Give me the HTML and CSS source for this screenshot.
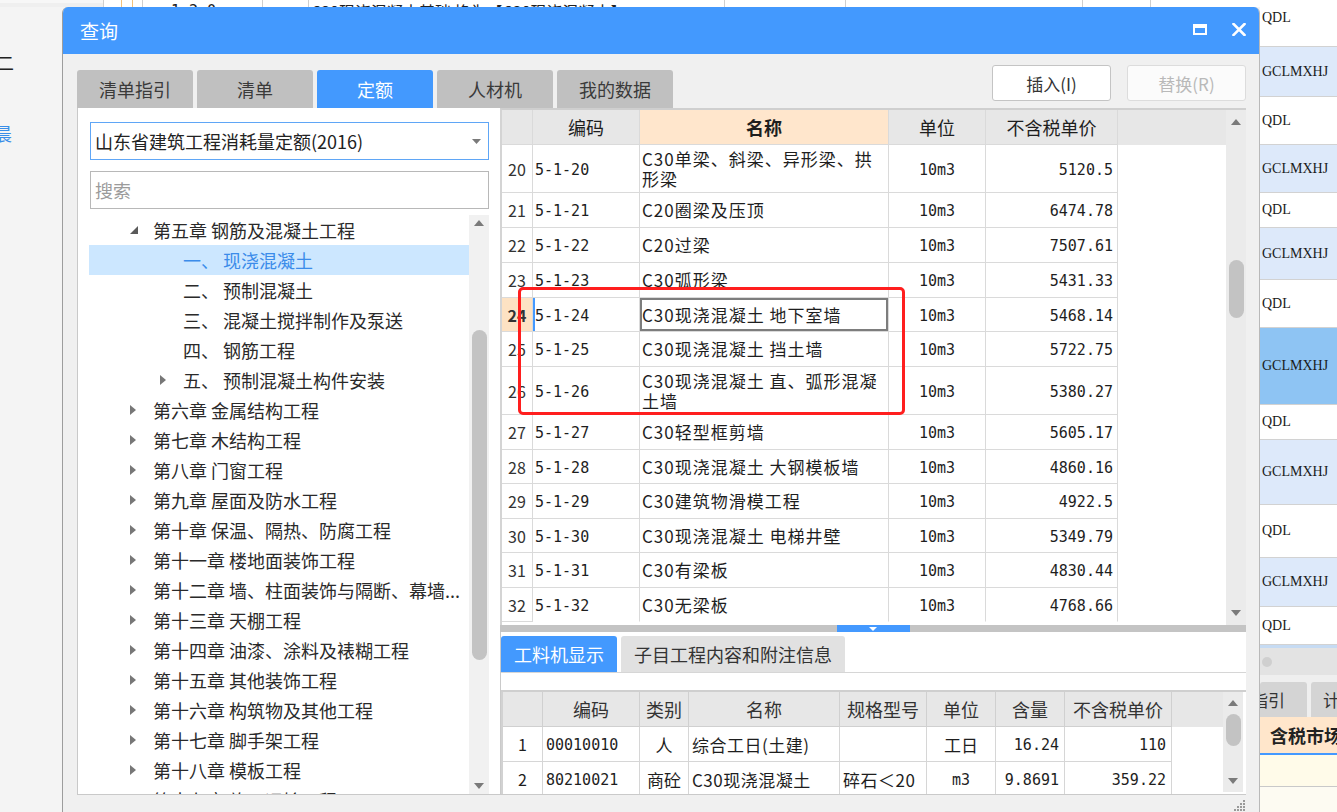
FILE: index.html
```html
<!DOCTYPE html>
<html lang="zh-CN">
<head>
<meta charset="utf-8">
<title>查询</title>
<link rel="stylesheet" href="styles.css">
</head>
<body>
<div class="app">
  <div class="app-main">
    <div class="strip">
      <div class="s0"></div><div></div><div class="so"></div><div class="so"></div>
      <div class="st1">1.2.0</div><div></div>
      <div class="st2">C30现浇混凝土基础 换为【C30现浇混凝土】</div>
      <div></div><div></div><div></div><div></div>
    </div>
    <div class="app-left">
      <div class="lt">二</div>
      <div class="lt lt-blue">晨</div>
    </div>
  </div>
  <div class="side">
    <div class="srow first">QDL</div>
    <div class="srow blue">GCLMXHJ</div>
    <div class="srow">QDL</div>
    <div class="srow blue">GCLMXHJ</div>
    <div class="srow">QDL</div>
    <div class="srow blue">GCLMXHJ</div>
    <div class="srow">QDL</div>
    <div class="srow sel">GCLMXHJ</div>
    <div class="srow">QDL</div>
    <div class="srow blue">GCLMXHJ</div>
    <div class="srow">QDL</div>
    <div class="srow blue">GCLMXHJ</div>
    <div class="srow">QDL</div>
    <div class="s-line"></div>
    <div class="s-hscroll"><span class="s-knob"></span></div>
    <div class="s-gap"></div>
    <div class="s-tabs"><div class="s-tab s-tab1">指引</div><div class="s-tab s-tab2">计</div></div>
    <div class="s-head">含税市场</div>
    <div class="s-blue"></div>
    <div class="s-yellow"></div>
    <div class="s-rest"></div>
  </div>
</div>

<div class="dialog">
  <div class="titlebar">
    <span class="title">查询</span>
    <div class="win-btns">
      <span class="max-icon"></span>
      <svg class="close-icon" width="14" height="13" viewBox="0 0 14 13"><path d="M1.5 1 L12.5 12 M12.5 1 L1.5 12" stroke="#fff" stroke-width="2.6" stroke-linecap="square"/></svg>
    </div>
  </div>
  <div class="dlg-body">
    <div class="toprow">
      <div class="tabs">
        <div class="tab">清单指引</div>
        <div class="tab">清单</div>
        <div class="tab active">定额</div>
        <div class="tab">人材机</div>
        <div class="tab">我的数据</div>
      </div>
      <div class="actions">
        <button class="btn">插入(I)</button>
        <button class="btn disabled">替换(R)</button>
      </div>
    </div>

    <div class="main">
      <div class="leftpanel">
        <div class="combo"><span>山东省建筑工程消耗量定额(2016)</span><svg class="combo-arrow" width="9" height="5" viewBox="0 0 9 5"><polygon points="0,0 9,0 4.5,5" fill="#7a7a7a"/></svg></div>
        <div class="search">搜索</div>
        <div class="tree">
          <div class="tree-list">
            <div class="node l1"><span class="twisty"><svg width="8" height="8" viewBox="0 0 8 8"><polygon points="8,0 8,8 0,8" fill="#5a5a5a"/></svg></span><span class="label">第五章 钢筋及混凝土工程</span></div>
            <div class="node l2 selected"><span class="twisty"></span><span class="label">一、 现浇混凝土</span></div>
            <div class="node l2"><span class="twisty"></span><span class="label">二、 预制混凝土</span></div>
            <div class="node l2"><span class="twisty"></span><span class="label">三、 混凝土搅拌制作及泵送</span></div>
            <div class="node l2"><span class="twisty"></span><span class="label">四、 钢筋工程</span></div>
            <div class="node l2"><span class="twisty"><svg width="6" height="10" viewBox="0 0 6 10"><polygon points="0,0 6,5 0,10" fill="#777"/></svg></span><span class="label">五、 预制混凝土构件安装</span></div>
            <div class="node l1"><span class="twisty"><svg width="6" height="10" viewBox="0 0 6 10"><polygon points="0,0 6,5 0,10" fill="#777"/></svg></span><span class="label">第六章 金属结构工程</span></div>
            <div class="node l1"><span class="twisty"><svg width="6" height="10" viewBox="0 0 6 10"><polygon points="0,0 6,5 0,10" fill="#777"/></svg></span><span class="label">第七章 木结构工程</span></div>
            <div class="node l1"><span class="twisty"><svg width="6" height="10" viewBox="0 0 6 10"><polygon points="0,0 6,5 0,10" fill="#777"/></svg></span><span class="label">第八章 门窗工程</span></div>
            <div class="node l1"><span class="twisty"><svg width="6" height="10" viewBox="0 0 6 10"><polygon points="0,0 6,5 0,10" fill="#777"/></svg></span><span class="label">第九章 屋面及防水工程</span></div>
            <div class="node l1"><span class="twisty"><svg width="6" height="10" viewBox="0 0 6 10"><polygon points="0,0 6,5 0,10" fill="#777"/></svg></span><span class="label">第十章 保温、隔热、防腐工程</span></div>
            <div class="node l1"><span class="twisty"><svg width="6" height="10" viewBox="0 0 6 10"><polygon points="0,0 6,5 0,10" fill="#777"/></svg></span><span class="label">第十一章 楼地面装饰工程</span></div>
            <div class="node l1"><span class="twisty"><svg width="6" height="10" viewBox="0 0 6 10"><polygon points="0,0 6,5 0,10" fill="#777"/></svg></span><span class="label">第十二章 墙、柱面装饰与隔断、幕墙...</span></div>
            <div class="node l1"><span class="twisty"><svg width="6" height="10" viewBox="0 0 6 10"><polygon points="0,0 6,5 0,10" fill="#777"/></svg></span><span class="label">第十三章 天棚工程</span></div>
            <div class="node l1"><span class="twisty"><svg width="6" height="10" viewBox="0 0 6 10"><polygon points="0,0 6,5 0,10" fill="#777"/></svg></span><span class="label">第十四章 油漆、涂料及裱糊工程</span></div>
            <div class="node l1"><span class="twisty"><svg width="6" height="10" viewBox="0 0 6 10"><polygon points="0,0 6,5 0,10" fill="#777"/></svg></span><span class="label">第十五章 其他装饰工程</span></div>
            <div class="node l1"><span class="twisty"><svg width="6" height="10" viewBox="0 0 6 10"><polygon points="0,0 6,5 0,10" fill="#777"/></svg></span><span class="label">第十六章 构筑物及其他工程</span></div>
            <div class="node l1"><span class="twisty"><svg width="6" height="10" viewBox="0 0 6 10"><polygon points="0,0 6,5 0,10" fill="#777"/></svg></span><span class="label">第十七章 脚手架工程</span></div>
            <div class="node l1"><span class="twisty"><svg width="6" height="10" viewBox="0 0 6 10"><polygon points="0,0 6,5 0,10" fill="#777"/></svg></span><span class="label">第十八章 模板工程</span></div>
            <div class="node l1"><span class="twisty"><svg width="6" height="10" viewBox="0 0 6 10"><polygon points="0,0 6,5 0,10" fill="#777"/></svg></span><span class="label">第十九章 施工运输工程</span></div>
          </div>
          <div class="vscroll tree-scroll">
            <div class="arr"><svg width="10" height="6" viewBox="0 0 10 6"><polygon points="0,6 10,6 5,0" fill="#7a7a7a"/></svg></div>
            <div class="thumb"></div>
            <div class="arr arr-down"><svg width="10" height="6" viewBox="0 0 10 6"><polygon points="0,0 10,0 5,6" fill="#7a7a7a"/></svg></div>
          </div>
        </div>
      </div>

      <div class="rightpanel">
        <div class="grid-area">
          <div class="grid">
            <div class="grow ghead"><div class="c"></div><div class="c">编码</div><div class="c hname">名称</div><div class="c">单位</div><div class="c">不含税单价</div></div>
            <div class="grow h48"><div class="c num">20</div><div class="c code">5-1-20</div><div class="c name">C30单梁、斜梁、异形梁、拱形梁</div><div class="c unit">10m3</div><div class="c price">5120.5</div></div>
            <div class="grow h35"><div class="c num">21</div><div class="c code">5-1-21</div><div class="c name">C20圈梁及压顶</div><div class="c unit">10m3</div><div class="c price">6474.78</div></div>
            <div class="grow h35"><div class="c num">22</div><div class="c code">5-1-22</div><div class="c name">C20过梁</div><div class="c unit">10m3</div><div class="c price">7507.61</div></div>
            <div class="grow h35"><div class="c num">23</div><div class="c code">5-1-23</div><div class="c name">C30弧形梁</div><div class="c unit">10m3</div><div class="c price">5431.33</div></div>
            <div class="grow h34 current"><div class="c num">24</div><div class="c code">5-1-24</div><div class="c name focus">C30现浇混凝土 地下室墙</div><div class="c unit">10m3</div><div class="c price">5468.14</div></div>
            <div class="grow h35"><div class="c num">25</div><div class="c code">5-1-25</div><div class="c name">C30现浇混凝土 挡土墙</div><div class="c unit">10m3</div><div class="c price">5722.75</div></div>
            <div class="grow h48"><div class="c num">26</div><div class="c code">5-1-26</div><div class="c name">C30现浇混凝土 直、弧形混凝土墙</div><div class="c unit">10m3</div><div class="c price">5380.27</div></div>
            <div class="grow h35"><div class="c num">27</div><div class="c code">5-1-27</div><div class="c name">C30轻型框剪墙</div><div class="c unit">10m3</div><div class="c price">5605.17</div></div>
            <div class="grow h34"><div class="c num">28</div><div class="c code">5-1-28</div><div class="c name">C30现浇混凝土 大钢模板墙</div><div class="c unit">10m3</div><div class="c price">4860.16</div></div>
            <div class="grow h35"><div class="c num">29</div><div class="c code">5-1-29</div><div class="c name">C30建筑物滑模工程</div><div class="c unit">10m3</div><div class="c price">4922.5</div></div>
            <div class="grow h34"><div class="c num">30</div><div class="c code">5-1-30</div><div class="c name">C30现浇混凝土 电梯井壁</div><div class="c unit">10m3</div><div class="c price">5349.79</div></div>
            <div class="grow h35"><div class="c num">31</div><div class="c code">5-1-31</div><div class="c name">C30有梁板</div><div class="c unit">10m3</div><div class="c price">4830.44</div></div>
            <div class="grow h34 last"><div class="c num">32</div><div class="c code">5-1-32</div><div class="c name">C30无梁板</div><div class="c unit">10m3</div><div class="c price">4768.66</div></div>
          </div>
          <div class="vscroll grid-scroll">
            <div class="arr"><svg width="10" height="6" viewBox="0 0 10 6"><polygon points="0,6 10,6 5,0" fill="#7a7a7a"/></svg></div>
            <div class="thumb"></div>
            <div class="arr arr-down"><svg width="10" height="6" viewBox="0 0 10 6"><polygon points="0,0 10,0 5,6" fill="#7a7a7a"/></svg></div>
          </div>
          <div class="annot"></div>
        </div>

        <div class="splitter"><span class="split-handle"><svg width="8" height="4" viewBox="0 0 8 4"><polygon points="0,0 8,0 4,4" fill="#fff"/></svg></span></div>

        <div class="detail">
          <div class="dtabs">
            <div class="dtab active">工料机显示</div>
            <div class="dtab wide">子目工程内容和附注信息</div>
          </div>
          <div class="dband"></div>
          <div class="dgrid-area">
            <div class="dgrid">
              <div class="drow dhead"><div class="c"></div><div class="c">编码</div><div class="c">类别</div><div class="c">名称</div><div class="c">规格型号</div><div class="c">单位</div><div class="c">含量</div><div class="c">不含税单价</div></div>
              <div class="drow"><div class="c dnum">1</div><div class="c dcode">00010010</div><div class="c dcenter">人</div><div class="c dname">综合工日(土建)</div><div class="c dname"></div><div class="c dcenter">工日</div><div class="c dval">16.24</div><div class="c dval">110</div></div>
              <div class="drow"><div class="c dnum">2</div><div class="c dcode">80210021</div><div class="c dcenter">商砼</div><div class="c dname">C30现浇混凝土</div><div class="c dname">碎石＜20</div><div class="c dcenter dmono">m3</div><div class="c dval">9.8691</div><div class="c dval">359.22</div></div>
            </div>
            <div class="vscroll dgrid-scroll">
              <div class="arr"><svg width="10" height="6" viewBox="0 0 10 6"><polygon points="0,6 10,6 5,0" fill="#7a7a7a"/></svg></div>
              <div class="thumb"></div>
              <div class="arr arr-down"><svg width="10" height="6" viewBox="0 0 10 6"><polygon points="0,0 10,0 5,6" fill="#7a7a7a"/></svg></div>
            </div>
          </div>
        </div>
      </div>
    </div>

    <div class="footer">
      <svg width="12" height="12" viewBox="0 0 12 12"><g fill="#9a9a9a"><rect x="9" y="1" width="2" height="2"/><rect x="6" y="4" width="2" height="2"/><rect x="9" y="4" width="2" height="2"/><rect x="3" y="7" width="2" height="2"/><rect x="6" y="7" width="2" height="2"/><rect x="9" y="7" width="2" height="2"/><rect x="0" y="10" width="2" height="2"/><rect x="3" y="10" width="2" height="2"/><rect x="6" y="10" width="2" height="2"/><rect x="9" y="10" width="2" height="2"/></g></svg>
    </div>
  </div>
</div>
</body>
</html>
```

FILE: styles.css
```css
* { box-sizing: border-box; }
html, body { margin: 0; padding: 0; }
body {
  width: 1337px;
  height: 812px;
  overflow: hidden;
  position: relative;
  background: #f4f4f4;
  font-family: "Noto Sans CJK SC", "Noto Sans", sans-serif;
  color: #333;
}

/* ---------- background application ---------- */
.app {
  display: grid;
  grid-template-columns: 1260px 77px;
  height: 812px;
}
.app-main { background: #f4f4f4; overflow: hidden; }
.strip {
  display: grid;
  grid-template-columns: 103px 18px 11px 10px 120px 46px 416px 121px 237px 68px 110px;
  height: 7px;
  overflow: hidden;
  background: #fff;
}
.strip > div {
  border-left: 1px solid #cfcfcf;
  font-size: 16px;
  line-height: 22px;
  white-space: nowrap;
  overflow: hidden;
  color: #222;
}
.strip .s0 { border-left: none; background: #efefef; border-top: 3px solid #f7f7f7; }
.strip .so { border-left-color: #f2c27c; }
.strip .st1 { padding-left: 28px; font-family: "DejaVu Sans Mono", monospace; font-size: 15px; }
.strip .st2 { padding-left: 2px; }

.app-left { padding-top: 43px; }
.lt {
  font-size: 18px;
  line-height: 24px;
  margin-left: -4px;
  color: #222;
}
.lt-blue { color: #3a8ee8; margin-top: 47px; margin-left: -6px; }

.side {
  display: grid;
  grid-template-rows: 47px 50px 48px 48px 35px 52px 48px 77px 35px 65px 53px 49px 38px 3px 27px 7px 35px 36px 2px 32px 1fr;
  background: #fff;
  font-family: "Liberation Serif", serif;
  font-size: 14px;
  color: #1a1a1a;
  overflow: hidden;
}
.srow {
  display: flex;
  align-items: center;
  padding-left: 2px;
  border-bottom: 1px solid #d2d2d2;
  white-space: nowrap;
}
.srow.first { padding-bottom: 10px; }
.srow.blue { background: #dde9fa; }
.srow.sel { background: #8ec4f3; }
.s-line { background: #c6dbf3; }
.s-hscroll { background: #e3e3e3; display: flex; align-items: center; padding-left: 2px; }
.s-knob { width: 10px; height: 10px; border-radius: 50%; background: #cfcfcf; }
.s-gap { background: #efefef; }
.s-tabs { background: #efefef; display: flex; gap: 4px; font-family: "Noto Sans CJK SC", sans-serif; font-size: 17px; }
.s-tab {
  background: #d4d4d4;
  border-radius: 3px 3px 0 0;
  display: flex;
  align-items: center;
  color: #333;
  overflow: hidden;
  white-space: nowrap;
}
.s-tab1 { width: 47px; text-indent: -9px; }
.s-tab2 { flex: 1; padding-left: 12px; }
.s-head {
  background: #ffe6cb;
  font-family: "Noto Sans CJK SC", sans-serif;
  font-weight: bold;
  font-size: 18px;
  display: flex;
  align-items: center;
  padding-left: 10px;
  white-space: nowrap;
  overflow: hidden;
  color: #222;
}
.s-blue { background: #4499ff; }
.s-yellow { background: #fffbe9; border-bottom: 1px solid #c9c9c9; }
.s-rest { background: #fdfbf2; }

/* ---------- dialog window ---------- */
.dialog {
  position: absolute;
  left: 62px;
  top: 7px;
  width: 1198px;
  height: 805px;
  background: #f0f0f0;
  border-left: 1px solid #9d9d9d;
  border-right: 1px solid #b9b9b9;
  border-radius: 6px 6px 0 0;
  overflow: hidden;
  display: flex;
  flex-direction: column;
}
.titlebar {
  height: 47px;
  flex: none;
  background: #4399fe;
  display: flex;
  align-items: center;
  padding: 0 13px 0 17px;
}
.title { color: #fff; font-size: 19px; }
.win-btns { margin-left: auto; display: flex; align-items: center; gap: 25px; padding-bottom: 2px; }
.max-icon {
  width: 14px;
  height: 11px;
  border: 2px solid #fff;
  border-top-width: 4px;
}
.close-icon { display: block; }

.dlg-body {
  flex: 1;
  display: flex;
  flex-direction: column;
  padding: 0 13px 0 14px;
}
.toprow { height: 54px; display: flex; flex: none; }
.tabs { display: flex; gap: 4px; align-self: flex-end; }
.tab {
  width: 116px;
  height: 38px;
  background: #c0c0c0;
  border-radius: 3px 3px 0 0;
  display: flex;
  align-items: center;
  justify-content: center;
  font-size: 18px;
  color: #3a3a3a;
}
.tab.active { background: #4399fe; color: #fff; }
.actions { margin-left: auto; margin-top: 11px; display: flex; gap: 16px; align-self: flex-start; }
.btn {
  width: 119px;
  height: 36px;
  background: #fff;
  border: 1px solid #c4c4c4;
  border-radius: 3px;
  font-family: "Noto Sans CJK SC", sans-serif;
  font-size: 17px;
  color: #333;
  padding: 0;
}
.btn.disabled { color: #b9b9b9; border-color: #dcdcdc; background: #fbfbfb; }

.main { display: flex; height: 687px; flex: none; }

/* left panel */
.leftpanel {
  width: 423px;
  flex: none;
  background: #fff;
  border-left: 1px solid #c9c9c9;
  border-bottom: 1px solid #c9c9c9;
  padding: 14px 11px 0 12px;
  display: flex;
  flex-direction: column;
}
.combo {
  height: 38px;
  flex: none;
  border: 1px solid #5fa6f6;
  display: flex;
  align-items: center;
  padding-left: 4px;
  font-size: 18px;
  color: #222;
  white-space: nowrap;
}
.combo-arrow { margin-left: auto; margin-right: 7px; }
.search {
  margin-top: 11px;
  height: 38px;
  flex: none;
  border: 1px solid #b8b8b8;
  display: flex;
  align-items: center;
  padding-left: 4px;
  font-size: 18px;
  color: #9b9b9b;
}
.tree { margin-top: 6px; flex: 1; display: flex; min-height: 0; margin-left: -1px; }
.tree-list { flex: 1; overflow: hidden; min-width: 0; }
.node {
  height: 30px;
  display: flex;
  align-items: center;
  font-size: 18px;
  color: #2a2a2a;
  white-space: nowrap;
}
.node.l1 { padding-left: 41px; }
.node.l2 { padding-left: 71px; }
.twisty {
  width: 10px;
  height: 12px;
  margin-right: 13px;
  display: flex;
  align-items: center;
  flex: none;
}
.node.selected { background: #cce7ff; color: #3b8cea; }
.label { overflow: hidden; }

.vscroll {
  width: 20px;
  flex: none;
  display: flex;
  flex-direction: column;
  align-items: center;
}
.arr { height: 16px; display: flex; align-items: center; justify-content: center; flex: none; }
.arr-down { margin-top: auto; }
.thumb { width: 15px; background: #c3c3c3; border-radius: 8px; flex: none; }
.tree-scroll { background: #f1f1f1; }
.tree-scroll .thumb { margin-top: 99px; height: 330px; }

/* right panel */
.rightpanel { flex: 1; display: flex; flex-direction: column; min-width: 0; }
.grid-area {
  height: 517px;
  flex: none;
  position: relative;
  display: flex;
  background: #fff;
  border-left: 2px solid #d4d4d4;
  border-top: 2px solid #cfcfcf;
}
.grid { flex: 1; overflow: hidden; }
.grow, .ghead {
  display: grid;
  grid-template-columns: 31px 107px 249px 97px 132px;
}
.ghead { height: 35px; background: #e7e7e7; }
.ghead .c {
  border-right: 1px solid #d2d2d2;
  border-bottom: 1px solid #d2d2d2;
  display: flex;
  align-items: center;
  justify-content: center;
  font-size: 18px;
  color: #333;
}
.ghead .hname { background: #ffe6cc; font-weight: bold; border-bottom: 2px solid #4499ff; color: #222; }
.h48 { height: 48px; }
.h35 { height: 35px; }
.h34 { height: 34px; }
.grow .c {
  border-right: 1px solid #dadada;
  border-bottom: 1px solid #dadada;
  display: flex;
  align-items: center;
  color: #1e1e1e;
  min-width: 0;
  overflow: hidden;
}
.grow .num { justify-content: center; font-size: 16px; color: #333; }
.grow .code { font-family: "DejaVu Sans Mono", monospace; font-size: 15px; padding-left: 2px; padding-top: 2px; }
.grow .name { font-size: 17px; letter-spacing: 1px; line-height: 20px; padding: 0 6px 0 2px; }
.grow .unit { font-family: "DejaVu Sans Mono", monospace; font-size: 15px; justify-content: center; padding-top: 2px; }
.grow .price { font-family: "DejaVu Sans Mono", monospace; font-size: 15px; justify-content: flex-end; padding-right: 4px; padding-top: 2px; }
.grow.current .num { background: #fde2c3; font-weight: bold; }
.grow.current .code { box-shadow: inset 2px 0 0 #4499ff; }
.grow .focus { box-shadow: inset 0 0 0 2px #7d7d7d; }
.grow.last .code, .grow.last .name, .grow.last .unit, .grow.last .price { border-bottom-color: transparent; }

.grid-scroll { background: #ebebeb; }
.grid-scroll .arr { height: 24px; }
.grid-scroll .thumb { margin-top: 126px; height: 58px; }
.annot {
  position: absolute;
  left: 16px;
  top: 177px;
  width: 387px;
  height: 128px;
  border: 3.5px solid #ff1e1e;
  border-radius: 5px;
}

.splitter {
  height: 7px;
  flex: none;
  background: #c4c4c4;
  display: flex;
  justify-content: center;
}
.split-handle {
  width: 73px;
  height: 7px;
  background: #4499ff;
  display: flex;
  align-items: center;
  justify-content: center;
}

.detail {
  flex: 1;
  display: flex;
  flex-direction: column;
  background: #fff;
  border-left: 1px solid #cacaca;
  border-bottom: 1px solid #cacaca;
  padding-top: 4px;
  min-height: 0;
}
.dtabs { display: flex; gap: 4px; height: 36px; flex: none; }
.dtab {
  width: 116px;
  background: #e1e1e1;
  border-radius: 3px 3px 0 0;
  display: flex;
  align-items: center;
  justify-content: center;
  font-size: 18px;
  color: #333;
}
.dtab.active { background: #4399fe; color: #fff; }
.dtab.wide { width: 224px; }
.dband {
  height: 20px;
  flex: none;
  border-top: 1px solid #d6d6d6;
  border-bottom: 2px solid #cfcfcf;
}
.dgrid-area { flex: 1; display: flex; min-height: 0; overflow: hidden; }
.dgrid { flex: 1; border-left: 2px solid #d2d2d2; overflow: hidden; }
.drow {
  display: grid;
  grid-template-columns: 40px 97px 49px 151px 87px 69px 69px 107px;
  height: 35px;
}
.drow .c {
  border-right: 1px solid #d6d6d6;
  border-bottom: 1px solid #d6d6d6;
  display: flex;
  align-items: center;
  font-size: 17px;
  color: #1e1e1e;
  white-space: nowrap;
  overflow: hidden;
}
.dhead { background: #e7e7e7; }
.dhead .c { justify-content: center; font-size: 18px; color: #333; border-color: #d0d0d0; }
.drow .dnum { justify-content: center; font-size: 16px; }
.drow .dcode { font-family: "DejaVu Sans Mono", monospace; font-size: 15px; padding-left: 3px; padding-top: 2px; }
.drow .dcenter { justify-content: center; }
.drow .dmono { font-family: "DejaVu Sans Mono", monospace; font-size: 15px; padding-top: 2px; }
.drow .dname { padding-left: 3px; letter-spacing: 0.5px; }
.drow .dval { font-family: "DejaVu Sans Mono", monospace; font-size: 15px; justify-content: flex-end; padding-right: 5px; padding-top: 2px; }
.dgrid-scroll { background: #ebebeb; margin-right: 3px; margin-bottom: 2px; }
.dgrid-scroll .arr { height: 22px; }
.dgrid-scroll .thumb { height: 32px; }

.footer {
  height: 17px;
  flex: none;
  display: flex;
  justify-content: flex-end;
  align-items: flex-end;
  padding-bottom: 1px;
}
```
